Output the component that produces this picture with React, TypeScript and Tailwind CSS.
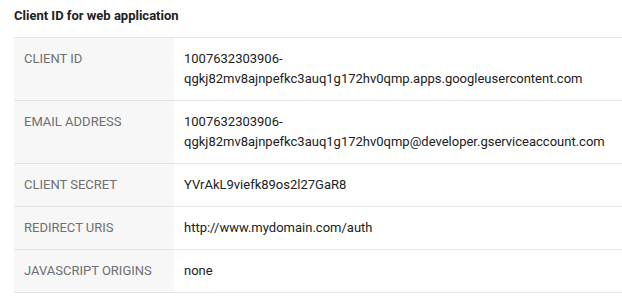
const rows: { label: string; value: string[] }[] = [
  { label: 'Client ID', value: ['1007632303906-', 'qgkj82mv8ajnpefkc3auq1g172hv0qmp.apps.googleusercontent.com'] },
  { label: 'Email address', value: ['1007632303906-', 'qgkj82mv8ajnpefkc3auq1g172hv0qmp@developer.gserviceaccount.com'] },
  { label: 'Client secret', value: ['YVrAkL9viefk89os2l27GaR8'] },
  { label: 'Redirect URIs', value: ['http://www.mydomain.com/auth'] },
  { label: 'JavaScript origins', value: ['none'] },
];

export default function App() {
  return (
    <div className="w-[622px] h-[304px] bg-white pl-[14px] font-['Roboto',_'Liberation_Sans',_sans-serif]">
      <h2 className="pt-[6px] pb-[11px] text-[13px] leading-[20px] font-bold text-[#212121]">
        Client ID for web application
      </h2>
      <div className="border-t border-[#e5e5e5]">
        {rows.map((row) => (
          <div key={row.label} className="flex border-b border-[#e5e5e5]">
            <div className="w-[160px] shrink-0 bg-[#f7f7f7] px-[10px] py-[11px] text-[13px] leading-[20px] uppercase text-[#6f6f6f]">
              {row.label}
            </div>
            <div className="px-[10px] py-[11px] text-[13px] leading-[20px] text-[#212121]">
              {row.value.map((line) => (
                <div key={line}>{line}</div>
              ))}
            </div>
          </div>
        ))}
      </div>
    </div>
  );
}
